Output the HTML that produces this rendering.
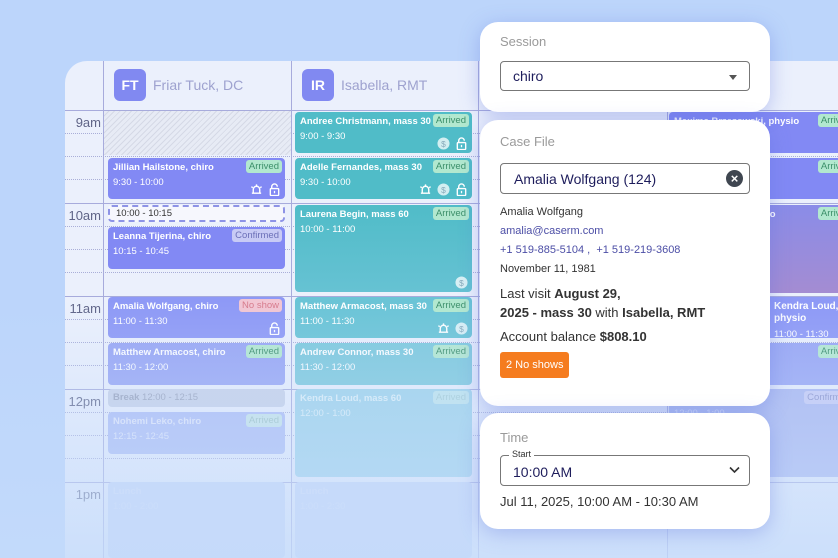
<!DOCTYPE html>
<html><head><meta charset="utf-8"><style>
*{box-sizing:border-box;margin:0;padding:0}
html,body{width:838px;height:558px;overflow:hidden}
body{position:relative;background:#bcd5fb;font-family:"Liberation Sans",sans-serif}
.a{position:absolute}
#cal{left:65px;top:61px;width:773px;height:497px;background:#ebf0fc;border-top-left-radius:22px;overflow:hidden}
.vl{position:absolute;top:0;bottom:0;width:1px;background:#a7abdc}
.hl{position:absolute;left:0;right:0;height:1px;background:#a7abdc}
.dl{position:absolute;left:0;right:0;border-top:1px dotted #a9aed8}
.tm{position:absolute;left:0;width:36px;text-align:right;font-size:13px;color:#5f6487}
.hd{position:absolute;top:8px;display:flex;align-items:center;font-size:14px;color:#9ea2cf}
.av{width:32px;height:32px;border-radius:6px;background:#8189f1;color:#fff;font-weight:bold;font-size:14px;display:flex;align-items:center;justify-content:center;margin-right:7px}
.ev{position:absolute;border-radius:4px;color:#fff;padding:4px 0 0 5px;font-size:9.5px;overflow:hidden}
.ev b{display:block;font-size:9.5px;white-space:nowrap;margin-bottom:4px}
.p{background:#8289f4}.t{background:#50bcc8}
.bd{position:absolute;right:3px;top:2px;font-size:9.5px;padding:1px 3px;border-radius:3px;background:#b2e8cf;color:#3c8f6a}
.ic{position:absolute;bottom:3px;right:4px;display:flex;gap:5px}
.pn{position:absolute;left:480px;width:290px;background:#fff;border-radius:18px;box-shadow:0 4px 20px rgba(90,110,220,.35);padding:0 20px}
.lb{font-size:13px;color:#9a9a9a}
.fld{border:1px solid #777;border-radius:4px;height:31px;position:relative;font-size:14px;color:#1e1d5c;padding:7px 12px}
.lk{color:#4c4ea6}
</style></head><body>
<div id="cal" class="a">
 <div class="vl" style="left:38px"></div><div class="vl" style="left:226px"></div><div class="vl" style="left:413px"></div><div class="vl" style="left:602px"></div>
 <div class="hl" style="top:49px"></div><div class="hl" style="top:142px"></div><div class="hl" style="top:235px"></div><div class="hl" style="top:328px"></div><div class="hl" style="top:421px"></div>
 <div class="dl" style="top:72px"></div><div class="dl" style="top:95px"></div><div class="dl" style="top:118px"></div>
 <div class="dl" style="top:165px"></div><div class="dl" style="top:188px"></div><div class="dl" style="top:211px"></div>
 <div class="dl" style="top:258px"></div><div class="dl" style="top:281px"></div><div class="dl" style="top:304px"></div>
 <div class="dl" style="top:351px"></div><div class="dl" style="top:374px"></div><div class="dl" style="top:397px"></div>
 <div class="tm" style="top:54px">9am</div><div class="tm" style="top:147px">10am</div><div class="tm" style="top:240px">11am</div><div class="tm" style="top:333px">12pm</div><div class="tm" style="top:426px">1pm</div>
 <div class="hd" style="left:49px"><div class="av">FT</div>Friar Tuck, DC</div>
 <div class="hd" style="left:237px"><div class="av">IR</div>Isabella, RMT</div>
 <div class="a" style="left:39px;top:50px;width:187px;height:44px;background:repeating-linear-gradient(135deg,#e7ebf5 0 3px,#d5d9e6 3px 4px)"></div>
</div>
<svg width="0" height="0" style="position:absolute"><defs>
<symbol id="d" viewBox="0 0 14 14"><circle cx="7" cy="7" r="6.5" fill="#fff" opacity=".75"/><text x="7" y="10.5" font-size="9" text-anchor="middle" fill="#8ab" font-family="Liberation Sans">$</text></symbol>
<symbol id="l" viewBox="0 0 14 14"><path d="M4 6V4a3 3 0 0 1 6 0" fill="none" stroke="#fff" stroke-width="1.5"/><rect x="2.5" y="6" width="9" height="7.5" rx="1" fill="none" stroke="#fff" stroke-width="1.5"/><rect x="6.3" y="8.5" width="1.4" height="2.5" fill="#fff"/></symbol>
<symbol id="b" viewBox="0 0 14 14"><path d="M3.5 11V7a3.5 3.5 0 0 1 7 0v4M2 11h10M7 1.5v2M1.5 4l1.5 1M12.5 4L11 5" fill="none" stroke="#fff" stroke-width="1.5"/></symbol>
</defs></svg>
<!-- col1 -->
<div class="ev p" style="left:108px;top:158px;width:177px;height:41px"><b>Jillian Hailstone, chiro</b>9:30 - 10:00<span class="bd">Arrived</span><span class="ic"><svg width="13" height="13"><use href="#b"/></svg><svg width="13" height="13"><use href="#l"/></svg></span></div>
<div class="a" style="left:108px;top:205px;width:177px;height:17px;border:2px dashed #8d93e6;border-radius:4px;background:#f6f7fd;font-size:9.5px;color:#333;padding:1px 6px">10:00 - 10:15</div>
<div class="ev p" style="left:108px;top:227px;width:177px;height:42px"><b>Leanna Tijerina, chiro</b>10:15 - 10:45<span class="bd" style="background:#c8cbf5;color:#6c70b8">Confirmed</span></div>
<div class="ev p" style="left:108px;top:297px;width:177px;height:41px;background:#8e99f6"><b>Amalia Wolfgang, chiro</b>11:00 - 11:30<span class="bd" style="background:#f2c6d3;color:#d77a8b">No show</span><span class="ic"><svg width="13" height="13"><use href="#l"/></svg></span></div>
<div class="ev p" style="left:108px;top:343px;width:177px;height:42px;background:#98a5f4"><b>Matthew Armacost, chiro</b>11:30 - 12:00<span class="bd">Arrived</span></div>
<div class="ev" style="left:108px;top:389px;width:177px;height:18px;background:#c9d2e8;color:#98a0b8;padding-top:3px"><span style="font-weight:bold">Break</span> 12:00 - 12:15</div>
<div class="ev" style="left:108px;top:412px;width:177px;height:42px;background:#aebdf6;color:#e4e8fb"><b>Nohemi Leko, chiro</b>12:15 - 12:45<span class="bd" style="background:#c8e6e8;color:#9bc3c0">Arrived</span></div>
<div class="ev" style="left:108px;top:482px;width:177px;height:76px;background:#cad9f8;color:#d7e1f8"><b>Lunch</b>1:00 - 2:00</div>
<!-- col2 -->
<div class="ev t" style="left:295px;top:112px;width:177px;height:41px"><b>Andree Christmann, mass 30</b>9:00 - 9:30<span class="bd">Arrived</span><span class="ic"><svg width="13" height="13"><use href="#d"/></svg><svg width="13" height="13"><use href="#l"/></svg></span></div>
<div class="ev t" style="left:295px;top:158px;width:177px;height:41px"><b>Adelle Fernandes, mass 30</b>9:30 - 10:00<span class="bd">Arrived</span><span class="ic"><svg width="13" height="13"><use href="#b"/></svg><svg width="13" height="13"><use href="#d"/></svg><svg width="13" height="13"><use href="#l"/></svg></span></div>
<div class="ev t" style="left:295px;top:205px;width:177px;height:87px;background:linear-gradient(#50bcc8,#66c2d3)"><b>Laurena Begin, mass 60</b>10:00 - 11:00<span class="bd">Arrived</span><span class="ic"><svg width="13" height="13"><use href="#d"/></svg></span></div>
<div class="ev t" style="left:295px;top:297px;width:177px;height:41px;background:#6ac4d6"><b>Matthew Armacost, mass 30</b>11:00 - 11:30<span class="bd">Arrived</span><span class="ic"><svg width="13" height="13"><use href="#b"/></svg><svg width="13" height="13"><use href="#d"/></svg></span></div>
<div class="ev t" style="left:295px;top:343px;width:177px;height:42px;background:#7cc9dc"><b>Andrew Connor, mass 30</b>11:30 - 12:00<span class="bd">Arrived</span></div>
<div class="ev t" style="left:295px;top:389px;width:177px;height:88px;background:#9ed4ea;color:#dff2f8"><b>Kendra Loud, mass 60</b>12:00 - 1:00<span class="bd" style="background:#bfe6ec;color:#a4cdd3">Arrived</span></div>
<div class="ev" style="left:295px;top:482px;width:177px;height:76px;background:#cad9f8;color:#d7e1f8"><b>Lunch</b>1:00 - 2:30</div>
<!-- col4 -->
<div class="ev p" style="left:669px;top:112px;width:175px;height:41px"><b>Maxima Brzezowski, physio</b><span class="bd" style="right:-10px">Arrived</span></div>
<div class="ev p" style="left:669px;top:158px;width:175px;height:41px"><b>Linda Buck, physio</b><span class="bd" style="right:-10px">Arrived</span></div>
<div class="ev" style="left:669px;top:205px;width:175px;height:88px;background:linear-gradient(#8a8ce8,#a48cd2)"><b>Shirley Adams, physio</b><span class="bd" style="right:-10px">Arrived</span></div>
<div class="ev p" style="left:669px;top:297px;width:175px;height:41px;background:#8e99f6;font-size:9.5px"><b style="font-size:10px;line-height:12px;white-space:normal;padding-left:100px">Kendra Loud, physio</b><span style="padding-left:100px">11:00 - 11:30</span></div>
<div class="ev p" style="left:669px;top:343px;width:175px;height:42px;background:#98a5f4"><b>Denise Kim, physio</b><span class="bd" style="right:-10px">Arrived</span></div>
<div class="ev" style="left:669px;top:389px;width:175px;height:88px;background:#aab6f0;color:#dde3fa"><b>Julia Park, physio in</b>12:00 - 1:00<span class="bd" style="right:-10px;background:#c8cbf5;color:#888ec8">Confirmed</span></div>
<!-- fade -->
<div class="a" style="left:0;top:300px;width:838px;height:258px;background:linear-gradient(rgba(196,219,251,0) 0%,rgba(196,219,251,.35) 40%,rgba(196,219,251,.8) 100%)"></div>
<!-- panels -->
<div class="pn" style="top:22px;height:90px;padding-top:12px"><div class="lb">Session</div><div class="fld" style="margin-top:12px;height:30px;padding-top:6px">chiro<span class="a" style="right:12px;top:13px;border:4px solid transparent;border-top:5px solid #555;border-bottom:0"></span></div></div>
<div class="pn" style="top:120px;height:286px;padding-top:14px;font-size:11px;color:#333">
 <div class="lb">Case File</div>
 <div class="fld" style="margin-top:14px;padding-left:13px;font-size:14px">Amalia Wolfgang (124)<span class="a" style="right:6px;top:6px;width:17px;height:17px;border-radius:50%;background:#3f4650;color:#fff;font-size:13px;line-height:17px;text-align:center;font-weight:bold">×</span></div>
 <div style="margin-top:9px;line-height:19px">Amalia Wolfgang<br><span class="lk">amalia@caserm.com</span><br><span class="lk">+1 519-885-5104 ,&nbsp; +1 519-219-3608</span><br>November 11, 1981</div>
 <div style="margin-top:5px;font-size:13px;line-height:19px">Last visit <b>August 29,<br>2025 - mass 30</b> with <b>Isabella, RMT</b></div>
 <div style="margin-top:7px;font-size:13px">Account balance <b>$808.10</b></div>
 <div style="margin-top:8px;display:inline-block;background:#f57c1f;color:#fff;font-size:11px;padding:7px 6px;border-radius:3px">2 No shows</div>
</div>
<div class="pn" style="top:413px;height:116px;padding-top:17px"><div class="lb">Time</div>
 <div class="fld" style="margin-top:10px;height:31px;padding-top:8px">10:00 AM<span class="a" style="left:8px;top:-7px;background:#fff;padding:0 3px;font-size:9px;color:#333">Start</span><svg class="a" style="right:9px;top:10px" width="11" height="8"><path d="M1 1.5l4.5 4.5 4.5-4.5" fill="none" stroke="#333" stroke-width="1.6"/></svg></div>
 <div style="margin-top:8px;font-size:13px;color:#333">Jul 11, 2025, 10:00 AM - 10:30 AM</div>
</div>
</body></html>
